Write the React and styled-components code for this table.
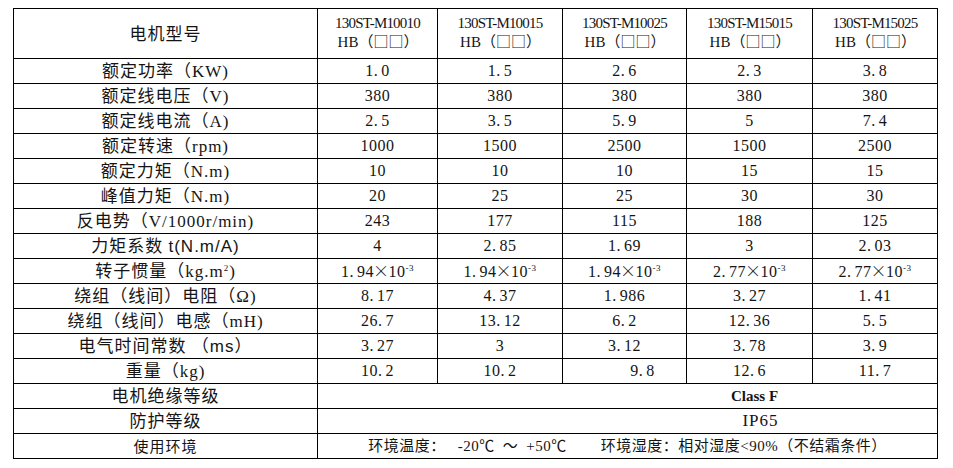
import React from "react";
import styled, { createGlobalStyle } from "styled-components";

const GlobalStyle = createGlobalStyle`
  body {
    margin: 0;
    background: #fff;
    font-family: "Liberation Serif", "Noto Sans CJK SC", serif;
    color: #141414;
  }
`;

const models = [
  "130ST-M10010",
  "130ST-M10015",
  "130ST-M10025",
  "130ST-M15015",
  "130ST-M15025",
];

const Sup = styled.sup`
  font-size: 9px;
  vertical-align: 6px;
  line-height: 0;
`;

const Sans = styled.span`
  font-family: "Liberation Sans", "Noto Sans CJK SC", sans-serif;
`;

const Cjk = styled.span`
  font-family: "Noto Sans CJK SC", sans-serif;
`;

const Times = styled.span`
  font-family: "Noto Sans CJK SC", sans-serif;
  font-weight: 300;
  margin: 0 -1px;
`;

// SimSun-style period: the dot sits left in a half-width cell
const Dot = styled.span`
  margin-right: 3px;
`;

const Num = ({ v }) => {
  const parts = v.split(".");
  if (parts.length < 2) return v;
  return (
    <>
      {parts[0]}
      <Dot>.</Dot>
      {parts[1]}
    </>
  );
};

const exp = (base) => (
  <>
    <Num v={base} />
    <Times>×</Times>10<Sup>-3</Sup>
  </>
);

const rows = [
  { label: "额定功率（KW)", values: ["1.0", "1.5", "2.6", "2.3", "3.8"] },
  { label: "额定线电压（V)", values: ["380", "380", "380", "380", "380"] },
  { label: "额定线电流（A)", values: ["2.5", "3.5", "5.9", "5", "7.4"] },
  { label: "额定转速（rpm)", values: ["1000", "1500", "2500", "1500", "2500"] },
  { label: "额定力矩（N.m)", values: ["10", "10", "10", "15", "15"] },
  { label: "峰值力矩（N.m)", values: ["20", "25", "25", "30", "30"] },
  { label: "反电势（V/1000r/min)", values: ["243", "177", "115", "188", "125"] },
  {
    label: (
      <>
        力矩系数 <Sans>t(N.m/A)</Sans>
      </>
    ),
    values: ["4", "2.85", "1.69", "3", "2.03"],
  },
  {
    label: (
      <>
        转子惯量（kg.m<Sup>2</Sup>)
      </>
    ),
    values: [exp("1.94"), exp("1.94"), exp("1.94"), exp("2.77"), exp("2.77")],
  },
  { label: "绕组（线间）电阻（Ω)", values: ["8.17", "4.37", "1.986", "3.27", "1.41"] },
  { label: "绕组（线间）电感（mH)", values: ["26.7", "13.12", "6.2", "12.36", "5.5"] },
  {
    label: (
      <>
        电气时间常数 （<Sans>ms</Sans>）
      </>
    ),
    values: ["3.27", "3", "3.12", "3.78", "3.9"],
  },
  { label: "重量（kg)", values: ["10.2", "10.2", "9.8", "12.6", "11.7"], shift: [0, 0, 36, 0, 0] },
];

const Table = styled.table`
  margin: 8px 0 0 13px;
  border-collapse: collapse;
  table-layout: fixed;
  width: 925px;
  border: 1px solid #000;
`;

const Col = styled.col`
  width: ${(p) => p.$w}px;
`;

const HeadRow = styled.tr`
  height: 50px;
`;

const Row = styled.tr`
  height: 25px;
`;

const Cell = styled.td`
  border: 1px solid #000;
  padding: 0;
  text-align: center;
  vertical-align: middle;
  white-space: nowrap;
  overflow: hidden;
`;

const LabelCell = styled(Cell)`
  line-height: 20px;
  letter-spacing: 1px;
  padding-top: 2px;
  font-size: ${(p) => (p.$small ? "15px" : "17px")};
`;

const ModelCell = styled(Cell)`
  font-size: 15px;
  line-height: 18px;
  padding-bottom: 2px;
`;

const ModelLine = styled.div`
  padding-left: ${(p) => p.$indent || 0}px;
  letter-spacing: ${(p) => (p.$indent ? 0 : -0.8)}px;
`;

const ValueCell = styled(Cell)`
  font-size: 16px;
  line-height: 20px;
  letter-spacing: 0.5px;
  padding-left: ${(p) => p.$shift || 0}px;
`;

const MergedCell = styled(Cell)`
  font-size: ${(p) => p.$size || 16}px;
  font-weight: ${(p) => (p.$bold ? 700 : 400)};
  letter-spacing: ${(p) => p.$spacing || 0}px;
  line-height: 20px;
  padding-left: ${(p) => p.$offset || 0}px;
`;

const EnvText = styled.span`
  font-size: 15px;
  letter-spacing: 0.5px;
`;

const Gap = styled.span`
  display: inline-block;
  width: ${(p) => p.$w}px;
`;

export default function App() {
  return (
    <>
      <GlobalStyle />
      <Table>
        <colgroup>
          <Col $w={304} />
          <Col $w={120} />
          <Col $w={125} />
          <Col $w={124} />
          <Col $w={126} />
          <Col $w={125} />
        </colgroup>
        <tbody>
          <HeadRow>
            <LabelCell>电机型号</LabelCell>
            {models.map((m) => (
              <ModelCell key={m}>
                <ModelLine>{m}</ModelLine>
                <ModelLine $indent={1}>
                  HB<Cjk>（□□）</Cjk>
                </ModelLine>
              </ModelCell>
            ))}
          </HeadRow>
          {rows.map((r, i) => (
            <Row key={i}>
              <LabelCell>{r.label}</LabelCell>
              {r.values.map((v, j) => (
                <ValueCell key={j} $shift={r.shift ? r.shift[j] : 0}>
                  {typeof v === "string" ? <Num v={v} /> : v}
                </ValueCell>
              ))}
            </Row>
          ))}
          <Row>
            <LabelCell>电机绝缘等级</LabelCell>
            <MergedCell colSpan={5} $bold $size={15} $offset={254}>
              Class F
            </MergedCell>
          </Row>
          <Row>
            <LabelCell>防护等级</LabelCell>
            <MergedCell colSpan={5} $size={17} $spacing={1} $offset={266}>
              IP65
            </MergedCell>
          </Row>
          <Row>
            <LabelCell $small>使用环境</LabelCell>
            <MergedCell colSpan={5}>
              <EnvText>
                环境温度：<Gap $w={12} />-20℃<Gap $w={8} />～<Gap $w={8} />+50℃
                <Gap $w={34} />
                环境湿度：相对湿度&lt;90%（不结霜条件）
              </EnvText>
            </MergedCell>
          </Row>
        </tbody>
      </Table>
    </>
  );
}
